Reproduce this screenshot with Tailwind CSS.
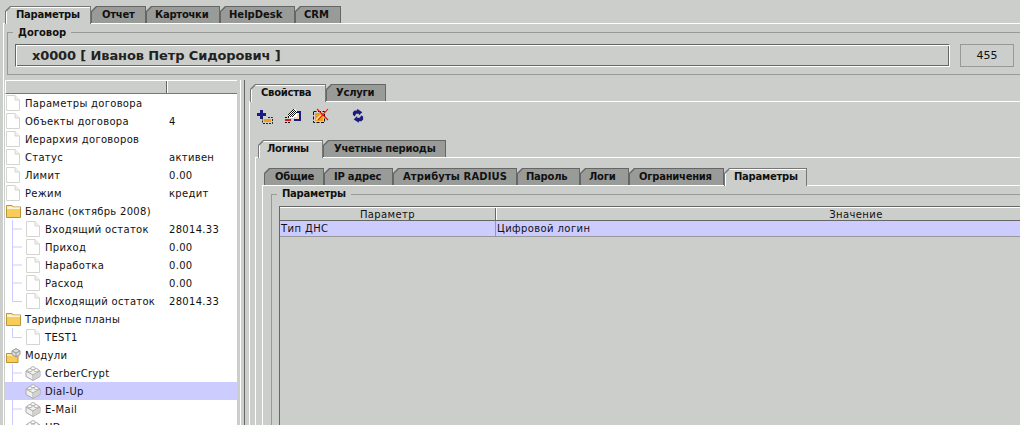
<!doctype html>
<html><head><meta charset="utf-8"><script src="https://cdn.jsdelivr.net/npm/@tailwindcss/browser@4"></script></head>
<body class="bg-[#cccecb] font-['DejaVu_Sans',sans-serif] text-[10px] text-[#111]">
<svg class="hidden"><defs>
<symbol id="file" viewBox="0 0 14 16"><path d="M.5.5H9L13.500 5V15.500H.5Z" fill="#fff" stroke="#d4d4d0"/><path d="M9 .5V5H13.500" fill="#f0f0ee" stroke="#d4d4d0"/></symbol>
<symbol id="folder" viewBox="0 0 15 14"><path d="M.5 3V1.500H6L7 3H14.500V13.500H.5Z" fill="#fbe9a8" stroke="#b8953c"/><path d="M1 5H14V13H1Z" fill="#f7cc58"/><path d="M1 4H14" stroke="#fff"/></symbol>
<symbol id="cube" viewBox="0 0 16 16"><path d="M1 6 8 2.500 15 6V11.500L8 15.500 1 11.500Z" fill="#efefed" stroke="#a8a8a8"/><path d="M1 6 8 10 15 6M8 10V15.500" fill="none" stroke="#a8a8a8"/><path d="M8.500 10.300 14.500 6.900V11.200L8.500 14.700Z" fill="#d2d2d0"/><ellipse cx="4.800" cy="5.200" rx="2.300" ry="1.500" fill="#fff" stroke="#b0b0b0"/><ellipse cx="11.200" cy="5.200" rx="2.300" ry="1.500" fill="#fff" stroke="#b0b0b0"/><ellipse cx="8" cy="3.200" rx="2.300" ry="1.500" fill="#fff" stroke="#b0b0b0"/></symbol>
</defs></svg>
<div class="relative h-[425px] w-[1020px] overflow-hidden">
  <!-- top tabs -->
  <div class="relative z-10 flex h-[23px] items-end whitespace-nowrap pl-[5px] font-bold tracking-[-0.25px]">
    <div class="-mb-px h-[18px] w-[86px] shrink-0 bg-[#777] px-px pt-px [clip-path:polygon(5px_0,100%_0,100%_100%,0_100%,0_5px)]"><div class="h-[17px] bg-[#cccecb] pl-[10px] leading-[15px] shadow-[inset_1px_1px_0_#fff] [clip-path:polygon(5px_0,100%_0,100%_100%,0_100%,0_5px)]">Параметры</div></div>
    <div class="h-[17px] w-[55px] shrink-0 bg-[#666] px-px pt-px [clip-path:polygon(5px_0,100%_0,100%_100%,0_100%,0_5px)]"><div class="h-[16px] bg-[#999b98] pl-[10px] leading-[15px] [clip-path:polygon(5px_0,100%_0,100%_100%,0_100%,0_5px)]">Отчет</div></div>
    <div class="h-[17px] w-[74px] shrink-0 bg-[#666] px-px pt-px [clip-path:polygon(5px_0,100%_0,100%_100%,0_100%,0_5px)]"><div class="h-[16px] bg-[#999b98] pl-[8px] leading-[15px] [clip-path:polygon(5px_0,100%_0,100%_100%,0_100%,0_5px)]">Карточки</div></div>
    <div class="h-[17px] w-[75px] shrink-0 bg-[#666] px-px pt-px tracking-normal [clip-path:polygon(5px_0,100%_0,100%_100%,0_100%,0_5px)]"><div class="h-[16px] bg-[#999b98] pl-[8px] leading-[15px] [clip-path:polygon(5px_0,100%_0,100%_100%,0_100%,0_5px)]">HelpDesk</div></div>
    <div class="h-[17px] w-[46px] shrink-0 bg-[#666] px-px pt-px tracking-normal [clip-path:polygon(5px_0,100%_0,100%_100%,0_100%,0_5px)]"><div class="h-[16px] bg-[#999b98] pl-[8px] leading-[15px] [clip-path:polygon(5px_0,100%_0,100%_100%,0_100%,0_5px)]">CRM</div></div>
  </div>
  <div class="ml-[3px] w-[1040px] border-t border-l border-white pt-[8px]">
    <!-- Договор -->
    <div class="ml-[3px] h-[43px] w-[1030px] border border-[#999]">
      <div class="-mt-[8px] ml-[5px] h-[15px] w-fit bg-[#cccecb] px-[5px] font-bold leading-[15px]">Договор</div>
      <div class="mt-[4px] ml-[7px] flex gap-[10px]">
        <div class="h-[23px] w-[935px] border border-t-[#666] border-l-[#666] border-r-white border-b-white pl-[16px] text-[13px] font-bold leading-[22px] tracking-[-0.12px] text-[#222] shadow-[inset_1px_1px_0_#fff,inset_-1px_-1px_0_#666]">x0000 [ Иванов Петр Сидорович ]</div>
        <div class="h-[23px] w-[54px] border border-[#999] text-center text-[11px] leading-[21px]">455</div>
      </div>
    </div>
    <div class="mt-[5px] flex h-[345px]">
      <!-- left tree -->
      <div class="ml-px w-[232px] shrink-0 overflow-hidden">
        <div class="flex h-[14px] border-t border-l border-t-white border-l-white border-b border-b-[#777] bg-[#cccecb]"><div class="w-[161px] border-r border-[#666]"></div><div class="flex-1 border-l border-white"></div></div>
        <div class="h-[331px] overflow-hidden whitespace-nowrap bg-white tracking-[0.3px]">
          <div class="flex h-[18px] items-start leading-[20px]"><div class="flex w-[164px] items-start"><svg class="ml-px mr-[5px] mt-px h-4 w-[14px]"><use href="#file"/></svg>Параметры договора</div></div>
          <div class="flex h-[18px] items-start leading-[20px]"><div class="flex w-[164px] items-start"><svg class="ml-px mr-[5px] mt-px h-4 w-[14px]"><use href="#file"/></svg>Объекты договора</div>4</div>
          <div class="flex h-[18px] items-start leading-[20px]"><div class="flex w-[164px] items-start"><svg class="ml-px mr-[5px] mt-px h-4 w-[14px]"><use href="#file"/></svg>Иерархия договоров</div></div>
          <div class="flex h-[18px] items-start leading-[20px]"><div class="flex w-[164px] items-start"><svg class="ml-px mr-[5px] mt-px h-4 w-[14px]"><use href="#file"/></svg>Статус</div>активен</div>
          <div class="flex h-[18px] items-start leading-[20px]"><div class="flex w-[164px] items-start"><svg class="ml-px mr-[5px] mt-px h-4 w-[14px]"><use href="#file"/></svg>Лимит</div>0.00</div>
          <div class="flex h-[18px] items-start leading-[20px]"><div class="flex w-[164px] items-start"><svg class="ml-px mr-[5px] mt-px h-4 w-[14px]"><use href="#file"/></svg>Режим</div>кредит</div>
          <div class="flex h-[18px] items-start leading-[20px]"><div class="flex w-[164px] items-start"><svg class="ml-px mr-[4px] mt-[2px] h-[14px] w-[15px]"><use href="#folder"/></svg>Баланс (октябрь 2008)</div></div>
          <div class="flex h-[18px] items-start leading-[20px]"><div class="flex w-[164px] items-start"><svg class="h-[18px] w-[21px]" viewBox="0 0 21 18"><path d="M7.500 0V18M7.500 9H17" stroke="#ccf" fill="none"/></svg><svg class="mr-[5px] mt-px h-4 w-[14px]"><use href="#file"/></svg>Входящий остаток</div>28014.33</div>
          <div class="flex h-[18px] items-start leading-[20px]"><div class="flex w-[164px] items-start"><svg class="h-[18px] w-[21px]" viewBox="0 0 21 18"><path d="M7.500 0V18M7.500 9H17" stroke="#ccf" fill="none"/></svg><svg class="mr-[5px] mt-px h-4 w-[14px]"><use href="#file"/></svg>Приход</div>0.00</div>
          <div class="flex h-[18px] items-start leading-[20px]"><div class="flex w-[164px] items-start"><svg class="h-[18px] w-[21px]" viewBox="0 0 21 18"><path d="M7.500 0V18M7.500 9H17" stroke="#ccf" fill="none"/></svg><svg class="mr-[5px] mt-px h-4 w-[14px]"><use href="#file"/></svg>Наработка</div>0.00</div>
          <div class="flex h-[18px] items-start leading-[20px]"><div class="flex w-[164px] items-start"><svg class="h-[18px] w-[21px]" viewBox="0 0 21 18"><path d="M7.500 0V18M7.500 9H17" stroke="#ccf" fill="none"/></svg><svg class="mr-[5px] mt-px h-4 w-[14px]"><use href="#file"/></svg>Расход</div>0.00</div>
          <div class="flex h-[18px] items-start leading-[20px]"><div class="flex w-[164px] items-start"><svg class="h-[18px] w-[21px]" viewBox="0 0 21 18"><path d="M7.500 0V9.500H17" stroke="#ccf" fill="none"/></svg><svg class="mr-[5px] mt-px h-4 w-[14px]"><use href="#file"/></svg>Исходящий остаток</div>28014.33</div>
          <div class="flex h-[18px] items-start leading-[20px]"><div class="flex w-[164px] items-start"><svg class="ml-px mr-[4px] mt-[2px] h-[14px] w-[15px]"><use href="#folder"/></svg>Тарифные планы</div></div>
          <div class="flex h-[18px] items-start leading-[20px]"><div class="flex w-[164px] items-start"><svg class="h-[18px] w-[21px]" viewBox="0 0 21 18"><path d="M7.500 0V9.500H17" stroke="#ccf" fill="none"/></svg><svg class="mr-[5px] mt-px h-4 w-[14px]"><use href="#file"/></svg>TEST1</div></div>
          <div class="flex h-[18px] items-start leading-[20px]"><div class="flex w-[164px] items-start"><svg class="ml-px mr-[4px] mt-px h-4 w-[15px]" viewBox="0 0 15 16"><path d="M.5 6.500H7V7.500H12V15.500H.5Z" fill="#f7cc58" stroke="#b8953c"/><path d="M1 8H11.500" stroke="#fff"/><path d="M6 4 10 1.500 14 4V7.500L10 10 6 7.500Z" fill="#ddd" stroke="#999"/><path d="M6 4 10 6 14 4M10 6V10" fill="none" stroke="#999"/></svg>Модули</div></div>
          <div class="flex h-[18px] items-start leading-[20px]"><div class="flex w-[164px] items-start"><svg class="h-[18px] w-[20px]" viewBox="0 0 20 18"><path d="M7.500 0V18M7.500 9H17" stroke="#ccf" fill="none"/></svg><svg class="mr-[4px] mt-px h-4 w-4"><use href="#cube"/></svg>CerberCrypt</div></div>
          <div class="flex h-[18px] items-start bg-[#ccf] leading-[20px]"><div class="flex w-[164px] items-start"><svg class="h-[18px] w-[20px]" viewBox="0 0 20 18"><path d="M7.500 0V18M7.500 9H17" stroke="#ccf" fill="none"/></svg><svg class="mr-[4px] mt-px h-4 w-4"><use href="#cube"/></svg>Dial-Up</div></div>
          <div class="flex h-[18px] items-start leading-[20px]"><div class="flex w-[164px] items-start"><svg class="h-[18px] w-[20px]" viewBox="0 0 20 18"><path d="M7.500 0V18M7.500 9H17" stroke="#ccf" fill="none"/></svg><svg class="mr-[4px] mt-px h-4 w-4"><use href="#cube"/></svg>E-Mail</div></div>
          <div class="flex h-[18px] items-start leading-[20px]"><div class="flex w-[164px] items-start"><svg class="h-[18px] w-[20px]" viewBox="0 0 20 18"><path d="M7.500 0V18M7.500 9H17" stroke="#ccf" fill="none"/></svg><svg class="mr-[4px] mt-px h-4 w-4"><use href="#cube"/></svg>HD</div></div>
        </div>
      </div>
      <!-- right pane -->
      <div class="ml-[3px] w-[800px] shrink-0 border-l border-white pl-[3px]">
        <div class="h-full border-l border-[#666] pl-[4px] pt-[4px]">
          <div class="relative z-10 flex h-[17px] items-end whitespace-nowrap pl-px font-bold tracking-[-0.25px]">
            <div class="-mb-px h-[18px] w-[76px] shrink-0 bg-[#777] px-px pt-px [clip-path:polygon(5px_0,100%_0,100%_100%,0_100%,0_5px)]"><div class="h-[17px] bg-[#cccecb] pl-[10px] leading-[15px] shadow-[inset_1px_1px_0_#fff] [clip-path:polygon(5px_0,100%_0,100%_100%,0_100%,0_5px)]">Свойства</div></div>
            <div class="h-[17px] w-[60px] shrink-0 bg-[#666] px-px pt-px [clip-path:polygon(5px_0,100%_0,100%_100%,0_100%,0_5px)]"><div class="h-[16px] bg-[#999b98] pl-[9px] leading-[15px] [clip-path:polygon(5px_0,100%_0,100%_100%,0_100%,0_5px)]">Услуги</div></div>
          </div>
          <div class="border-t border-l border-white pl-[5px]">
            <!-- toolbar -->
            <div class="flex h-[38px] items-start pt-[6px] pl-[2px]">
              <svg class="h-4 w-4" viewBox="0 0 16 16"><path d="M3 0H6V3H9V6H6V9H3V6H0V3H3Z" fill="#1c1c80" transform="translate(0 2)"/><path d="M6 15.500H15.500V9.500H11" fill="none" stroke="#222" stroke-dasharray="2 1"/><path d="M5.500 9.500V15.500" stroke="#222" stroke-dasharray="2 1"/><rect x="7" y="11" width="7" height="3" fill="#f29b1d"/></svg>
              <svg class="ml-[12px] h-4 w-4" viewBox="0 0 16 16" shape-rendering="crispEdges"><path d="M10 5H15V11H10Z" fill="#f7d8b0"/><path d="M9 4H15V12H9" fill="none" stroke="#1c1c80" stroke-width="1.500"/><path d="M3 7 8 1H11L12 4V9L9 9.500H4Z" fill="#fff"/><path d="M8 1.500H10M7 2.500H11M6 3.500H12M5 4.500H12M4 5.500H12M3 6.500H11M4 7.500H10M3 8.500H9" stroke="#111" stroke-dasharray="1 1" fill="none"/><path d="M0 11H6V13H0Z" fill="#d81818"/><path d="M0 9.500H4M0 14.500H6" stroke="#111" stroke-dasharray="2 1"/></svg>
              <svg class="ml-[12px] h-4 w-4" viewBox="0 0 16 16"><rect x=".5" y="3.500" width="11" height="11" fill="none" stroke="#111" stroke-dasharray="3 1.500"/><rect x="2" y="5" width="8" height="8" fill="#f29b1d"/><path d="M3 12 8 7" stroke="#fde2b5" stroke-width="1.500"/><path d="M4 1 15 12M15 1 5 12" stroke="#e01010" stroke-width="1.100"/></svg>
              <svg class="ml-[23px] h-4 w-[12px]" viewBox="0 0 14 16"><path d="M6 0V2H3L1 4V7L3 9 5 6H8V8L12 4Z" fill="#1c1c80" transform="translate(0 -.5)"/><path d="M8 16V14H11L13 12V9L11 7 9 10H6V8L2 12Z" fill="#1c1c80"/></svg>
            </div>
            <div class="relative z-10 flex h-[17px] items-end whitespace-nowrap pl-[3px] font-bold tracking-[-0.25px]">
              <div class="-mb-px h-[18px] w-[65px] shrink-0 bg-[#777] px-px pt-px [clip-path:polygon(5px_0,100%_0,100%_100%,0_100%,0_5px)]"><div class="h-[17px] bg-[#cccecb] pl-[8px] leading-[15px] shadow-[inset_1px_1px_0_#fff] [clip-path:polygon(5px_0,100%_0,100%_100%,0_100%,0_5px)]">Логины</div></div>
              <div class="h-[17px] w-[123px] shrink-0 bg-[#666] px-px pt-px [clip-path:polygon(5px_0,100%_0,100%_100%,0_100%,0_5px)]"><div class="h-[16px] bg-[#999b98] pl-[10px] leading-[15px] [clip-path:polygon(5px_0,100%_0,100%_100%,0_100%,0_5px)]">Учетные периоды</div></div>
            </div>
            <div class="border-t border-l border-white pl-[6px] pt-[10px]">
              <div class="relative z-10 flex h-[17px] items-end whitespace-nowrap pl-[2px] font-bold tracking-[-0.25px]">
                <div class="h-[17px] w-[60px] shrink-0 bg-[#666] px-px pt-px [clip-path:polygon(5px_0,100%_0,100%_100%,0_100%,0_5px)]"><div class="h-[16px] bg-[#999b98] pl-[10px] leading-[15px] [clip-path:polygon(5px_0,100%_0,100%_100%,0_100%,0_5px)]">Общие</div></div>
                <div class="h-[17px] w-[69px] shrink-0 bg-[#666] px-px pt-px [clip-path:polygon(5px_0,100%_0,100%_100%,0_100%,0_5px)]"><div class="h-[16px] bg-[#999b98] pl-[9px] leading-[15px] [clip-path:polygon(5px_0,100%_0,100%_100%,0_100%,0_5px)]">IP адрес</div></div>
                <div class="h-[17px] w-[124px] shrink-0 bg-[#666] px-px pt-px tracking-[0.12px] [clip-path:polygon(5px_0,100%_0,100%_100%,0_100%,0_5px)]"><div class="h-[16px] bg-[#999b98] pl-[9px] leading-[15px] [clip-path:polygon(5px_0,100%_0,100%_100%,0_100%,0_5px)]">Атрибуты RADIUS</div></div>
                <div class="h-[17px] w-[63px] shrink-0 bg-[#666] px-px pt-px [clip-path:polygon(5px_0,100%_0,100%_100%,0_100%,0_5px)]"><div class="h-[16px] bg-[#999b98] pl-[8px] leading-[15px] [clip-path:polygon(5px_0,100%_0,100%_100%,0_100%,0_5px)]">Пароль</div></div>
                <div class="h-[17px] w-[49px] shrink-0 bg-[#666] px-px pt-px [clip-path:polygon(5px_0,100%_0,100%_100%,0_100%,0_5px)]"><div class="h-[16px] bg-[#999b98] pl-[8px] leading-[15px] [clip-path:polygon(5px_0,100%_0,100%_100%,0_100%,0_5px)]">Логи</div></div>
                <div class="h-[17px] w-[95px] shrink-0 bg-[#666] px-px pt-px [clip-path:polygon(5px_0,100%_0,100%_100%,0_100%,0_5px)]"><div class="h-[16px] bg-[#999b98] pl-[9px] leading-[15px] [clip-path:polygon(5px_0,100%_0,100%_100%,0_100%,0_5px)]">Ограничения</div></div>
                <div class="-mb-px h-[18px] w-[83px] shrink-0 bg-[#777] px-px pt-px [clip-path:polygon(5px_0,100%_0,100%_100%,0_100%,0_5px)]"><div class="h-[17px] bg-[#cccecb] pl-[9px] leading-[15px] shadow-[inset_1px_1px_0_#fff] [clip-path:polygon(5px_0,100%_0,100%_100%,0_100%,0_5px)]">Параметры</div></div>
              </div>
              <div class="border-t border-l border-white pl-[8px] pt-[8px]">
                <div class="h-[300px] border-t border-l border-[#999] pl-[7px]">
                  <div class="-mt-[8px] -ml-[2px] h-[14px] w-fit bg-[#cccecb] px-[5px] font-bold leading-[14px] tracking-[-0.25px]">Параметры</div>
                  <div class="mt-[5px] h-[300px] w-[940px] border-t border-l border-[#666] tracking-[0.4px]">
                    <div class="flex h-[14px] border-t border-b border-t-white border-b-[#666] leading-[13px]">
                      <div class="w-[216px] shrink-0 border-r border-[#666] text-center">Параметр</div>
                      <div class="w-[719px] shrink-0 border-l border-white text-center">Значение</div>
                    </div>
                    <div class="flex h-[16px] border-b border-[#999] bg-[#ccf] leading-[15px]">
                      <div class="w-[216px] shrink-0 border-r border-[#999] pl-px">Тип ДНС</div>
                      <div class="w-[719px] shrink-0 pl-px">Цифровой логин</div>
                    </div>
                  </div>
                </div>
              </div>
            </div>
          </div>
        </div>
      </div>
    </div>
  </div>
</div>
</body></html>
